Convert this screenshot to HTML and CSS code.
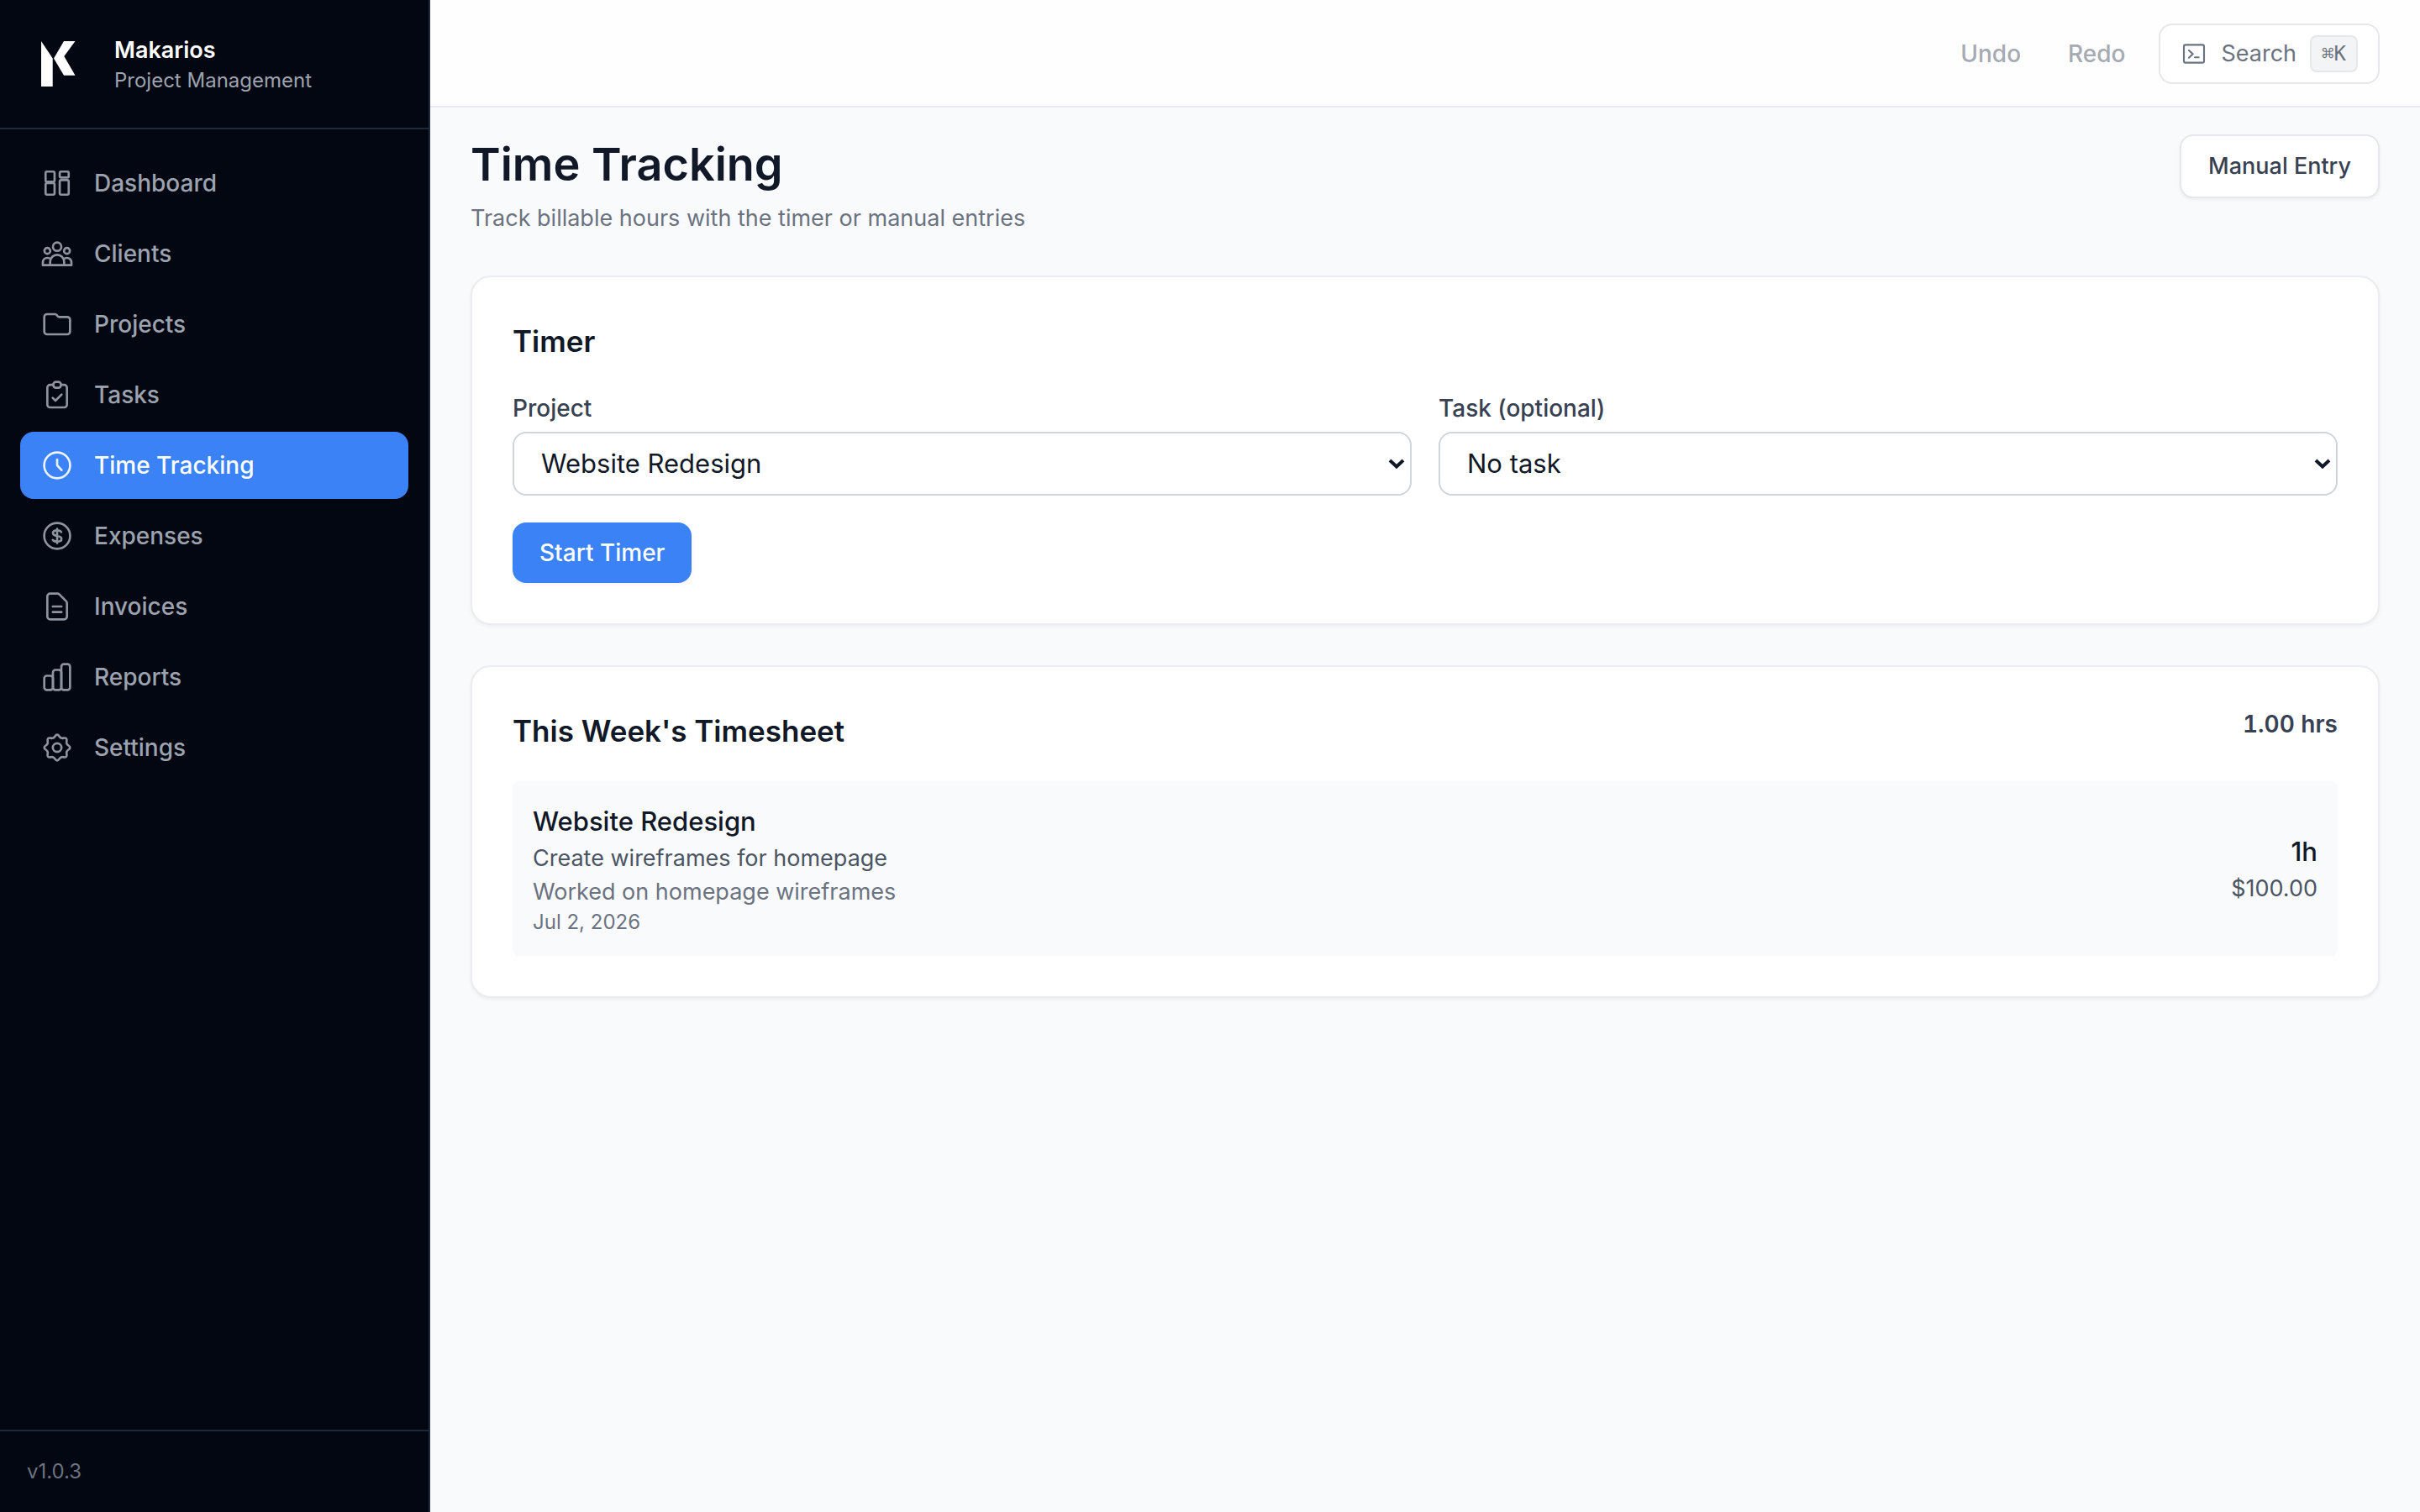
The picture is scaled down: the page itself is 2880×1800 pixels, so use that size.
FILE: index.html
```html
<!DOCTYPE html>
<html lang="en">
<head>
<meta charset="utf-8">
<meta name="viewport" content="width=device-width, initial-scale=1">
<title>Time Tracking - Makarios</title>
<link rel="stylesheet" href="styles.css">
</head>
<body>
<div class="app">
  <aside class="sidebar">
    <div class="brand">
      <svg class="brand-logo" viewBox="0 0 72 72" aria-hidden="true"><path d="M9 9 22.7 29.5V63H9zM36 9h13.5L36.3 27 49.5 49.7H36L24 29.5z"/></svg>
      <div>
        <div class="brand-name">Makarios</div>
        <div class="brand-sub">Project Management</div>
      </div>
    </div>
    <nav class="nav">
      <a class="nav-link" href="#dashboard"><svg class="icon" viewBox="0 0 24 24" aria-hidden="true"><rect x="3.75" y="3.75" width="6.4" height="7.3" rx="1"/><rect x="3.75" y="12" width="6.4" height="8.25" rx="1"/><rect x="13.85" y="3.75" width="6.4" height="4.3" rx="1"/><rect x="13.85" y="9.8" width="6.4" height="10.45" rx="1"/></svg>Dashboard</a>
      <a class="nav-link" href="#clients"><svg class="icon" viewBox="0 0 24 24" aria-hidden="true"><circle cx="12" cy="7" r="3"/><circle cx="5" cy="10" r="2.1"/><circle cx="19" cy="10" r="2.1"/><path d="M7 20.2v-2.4a5 5 0 0 1 10 0v2.4M7.4 15.8A3.4 3.4 0 0 0 5 15a3.2 3.2 0 0 0-3.2 3.2v2h20.4v-2A3.2 3.2 0 0 0 19 15c-.9 0-1.7.3-2.4.8"/></svg>Clients</a>
      <a class="nav-link" href="#projects"><svg class="icon" viewBox="0 0 24 24" aria-hidden="true"><path d="M2.8 6.8a2 2 0 0 1 2-2h5.600c.6 0 1 .2 1.400.7l.6.8c.2.400.5.5 1 .5h5.800a2 2 0 0 1 2 2v8.400a2 2 0 0 1-2 2H4.800a2 2 0 0 1-2-2z"/></svg>Projects</a>
      <a class="nav-link" href="#tasks"><svg class="icon" viewBox="0 0 24 24" aria-hidden="true"><path d="M9.2 4.900H7a2 2 0 0 0-2 2V19a2 2 0 0 0 2 2h10a2 2 0 0 0 2-2V6.900a2 2 0 0 0-2-2h-2.200"/><rect x="9.2" y="2.8" width="5.6" height="4.2" rx="2"/><path d="m8.8 14.2 2 2 4.400-4.400"/></svg>Tasks</a>
      <a class="nav-link active" href="#time" aria-current="page"><svg class="icon" viewBox="0 0 24 24" aria-hidden="true"><circle cx="12" cy="12" r="9.25"/><path d="M12 7.800V12l3.200 3.400"/></svg>Time Tracking</a>
      <a class="nav-link" href="#expenses"><svg class="icon" viewBox="0 0 24 24" aria-hidden="true"><circle cx="12" cy="12" r="9.25"/><path d="M12 7v10.200M14.900 9.200c-.5-.8-1.600-1.200-2.900-1.200-1.900 0-3 .8-3 1.900s1.100 1.800 3 2.100 3.100.9 3.100 2.100-1.200 2-3.100 2c-1.400 0-2.500-.4-3.100-1.200"/></svg>Expenses</a>
      <a class="nav-link" href="#invoices"><svg class="icon" viewBox="0 0 24 24" aria-hidden="true"><path d="M5 4.800a2 2 0 0 1 2-2h5.200c.5 0 1 .2 1.400.6l4.800 4.800c.4.400.6.900.6 1.400v9.600a2 2 0 0 1-2 2H7a2 2 0 0 1-2-2zM8.900 12h6.200M8.900 16h6.200"/></svg>Invoices</a>
      <a class="nav-link" href="#reports"><svg class="icon" viewBox="0 0 24 24" aria-hidden="true"><rect x="2.8" y="11.1" width="6.2" height="10.1" rx="1.8"/><rect x="9" y="6.9" width="6" height="14.3" rx="1.8"/><rect x="15" y="2.8" width="6.2" height="18.4" rx="1.8"/></svg>Reports</a>
      <a class="nav-link" href="#settings"><svg class="icon" viewBox="-12 -12 24 24" aria-hidden="true"><circle r="3.1"/><path d="M0-9.200C1.400-9.200 1.440-7.410 2.830-6.840 4.220-6.270 5.510-7.490 6.500-6.500 7.490-5.510 6.270-4.220 6.840-2.830 7.410-1.440 9.200-1.400 9.200 0 9.200 1.400 7.410 1.440 6.840 2.830 6.270 4.220 7.490 5.510 6.500 6.500 5.510 7.490 4.220 6.270 2.830 6.840 1.440 7.410 1.400 9.200 0 9.200-1.400 9.200-1.440 7.410-2.830 6.840-4.220 6.270-5.510 7.490-6.500 6.500-7.490 5.510-6.270 4.220-6.840 2.830-7.410 1.440-9.200 1.400-9.200 0-9.200-1.400-7.410-1.440-6.840-2.830-6.270-4.220-7.490-5.510-6.500-6.500-5.510-7.490-4.220-6.270-2.830-6.840-1.440-7.410-1.400-9.200 0-9.200z"/></svg>Settings</a>
    </nav>
    <div class="sidebar-footer">v1.0.3</div>
  </aside>
  <div class="content">
    <header class="topbar">
      <div class="history">
        <button class="ghost-button" type="button" disabled>Undo</button>
        <button class="ghost-button" type="button" disabled>Redo</button>
      </div>
      <button class="search-button" type="button">
        <svg class="search-icon" viewBox="0 0 24 24" aria-hidden="true"><rect x="3" y="4" width="18" height="16" rx="1.5"/><path d="m7.500 9 3.500 3.200-3.500 3.300M12.800 15.200h3.400"/></svg>
        <span>Search</span>
        <kbd class="shortcut">⌘K</kbd>
      </button>
    </header>
    <main class="page">
      <div class="page-header">
        <div>
          <h1 class="page-title">Time Tracking</h1>
          <p class="page-subtitle">Track billable hours with the timer or manual entries</p>
        </div>
        <button class="secondary-button" type="button">Manual Entry</button>
      </div>
      <section class="card">
        <h2 class="card-title">Timer</h2>
        <form class="timer-form">
          <div class="fields">
            <div class="field">
              <label class="field-label" for="project">Project</label>
              <select class="select" id="project"><option>Website Redesign</option></select>
            </div>
            <div class="field">
              <label class="field-label" for="task">Task (optional)</label>
              <select class="select" id="task"><option>No task</option></select>
            </div>
          </div>
          <button class="primary-button" type="button">Start Timer</button>
        </form>
      </section>
      <section class="card">
        <div class="card-header">
          <h2 class="card-title">This Week's Timesheet</h2>
          <div class="total">1.00 hrs</div>
        </div>
        <div class="entry">
          <div>
            <div class="entry-project">Website Redesign</div>
            <div class="entry-task">Create wireframes for homepage</div>
            <div class="entry-note">Worked on homepage wireframes</div>
            <div class="entry-date">Jul 2, 2026</div>
          </div>
          <div class="entry-figures">
            <div class="entry-project">1h</div>
            <div class="entry-task">$100.00</div>
          </div>
        </div>
      </section>
    </main>
  </div>
</div>
</body>
</html>
```
FILE: styles.css
```css
*, *::before, *::after { box-sizing: border-box; }

body {
  margin: 0;
  background: #f9fafc;
  color: #111827;
  font-family: Inter, "Liberation Sans", sans-serif;
  font-size: 27px;
  line-height: 40px;
}

h1, h2, p { margin: 0; }

button, select { font: inherit; }

.app { display: flex; min-height: 100vh; }

/* Sidebar */
.sidebar {
  display: flex;
  flex-direction: column;
  flex: 0 0 512px;
  background: #030712;
  border-right: 2px solid #1f2937;
}

.brand {
  display: flex;
  align-items: center;
  gap: 24px;
  padding: 40px;
  border-bottom: 2px solid #1f2937;
}

.brand-logo { width: 72px; height: 72px; fill: #fff; }

.brand-name { color: #fff; font-weight: 600; }

.brand-sub { color: #9ca3af; font-size: 24px; line-height: 32px; }

.nav {
  display: flex;
  flex: 1;
  flex-direction: column;
  gap: 4px;
  padding: 24px;
}

.nav-link {
  display: flex;
  align-items: center;
  gap: 24px;
  padding: 20px 24px;
  border-radius: 16px;
  color: #9ca3af;
  font-size: 28px;
  font-weight: 500;
  text-decoration: none;
}

.nav-link.active { background: #3b82f6; color: #fff; }

.icon {
  width: 40px;
  height: 40px;
  fill: none;
  stroke: currentColor;
  stroke-width: 1.6;
  stroke-linecap: round;
  stroke-linejoin: round;
  opacity: 0.9;
}

.sidebar-footer {
  padding: 32px;
  border-top: 2px solid #1f2937;
  color: #6b7280;
  font-size: 24px;
  line-height: 32px;
}

/* Top bar */
.content { flex: 1; min-width: 0; }

.topbar {
  display: flex;
  align-items: center;
  justify-content: flex-end;
  gap: 16px;
  padding: 28px 48px 26px;
  background: #fefefe;
  border-bottom: 2px solid #e9eaee;
}

.history { display: flex; gap: 8px; }

.ghost-button {
  padding: 16px 24px;
  border: 0;
  background: none;
  color: #a6aab3;
  font-size: 28px;
  font-weight: 500;
}

.search-button {
  display: flex;
  align-items: center;
  gap: 16px;
  height: 72px;
  padding: 0 24px;
  border: 2px solid #e5e7eb;
  border-radius: 16px;
  background: #fff;
  color: #6b7280;
}

.search-icon {
  width: 32px;
  height: 32px;
  fill: none;
  stroke: currentColor;
  stroke-width: 1.6;
  stroke-linecap: round;
  stroke-linejoin: round;
}

.shortcut {
  padding: 4px 12px;
  border: 2px solid #e5e7eb;
  border-radius: 8px;
  background: #f3f4f6;
  font-family: "DejaVu Sans Mono", "Liberation Mono", monospace;
  font-size: 24px;
  line-height: 32px;
}

/* Page */
.page {
  display: flex;
  flex-direction: column;
  gap: 48px;
  padding: 32px 48px;
}

.page-header {
  display: flex;
  align-items: flex-start;
  justify-content: space-between;
}

.page-title { font-size: 54px; font-weight: 600; line-height: 72px; }

.page-subtitle { margin-top: 8px; color: #6b7280; }

.secondary-button {
  padding: 16px 32px;
  border: 2px solid #e5e7eb;
  border-radius: 16px;
  background: #fff;
  box-shadow: 0 2px 4px rgba(0, 0, 0, 0.05);
  color: #374151;
  font-weight: 500;
}

.card {
  padding: 48px;
  border: 2px solid #ebecf0;
  border-radius: 24px;
  background: #fff;
  box-shadow: 0 2px 4px rgba(0, 0, 0, 0.05);
}

.card-title { font-size: 35px; font-weight: 600; line-height: 56px; }

.timer-form {
  display: flex;
  flex-direction: column;
  align-items: flex-start;
  gap: 32px;
  margin-top: 32px;
}

.fields {
  display: grid;
  grid-template-columns: 1fr 1fr;
  gap: 32px;
  width: 100%;
}

.field { display: flex; flex-direction: column; gap: 8px; }

.field-label { color: #374151; font-size: 28px; font-weight: 500; }

.select {
  height: 76px;
  padding: 0 32px;
  border: 2px solid #d1d5db;
  border-radius: 16px;
  appearance: none;
  background: #fff url("data:image/svg+xml,%3Csvg xmlns='http://www.w3.org/2000/svg' viewBox='0 0 20 12'%3E%3Cpath d='m2 2 8 7.500 8-7.500' fill='none' stroke='%23111827' stroke-width='4'/%3E%3C/svg%3E") no-repeat right 6px center / 20px 12px;
  color: #111827;
  font-size: 31px;
}

.primary-button {
  padding: 16px 32px;
  border: 0;
  border-radius: 16px;
  background: #3b82f6;
  box-shadow: 0 2px 4px rgba(0, 0, 0, 0.05);
  color: #fff;
  font-size: 28px;
  font-weight: 500;
}

.card-header {
  display: flex;
  align-items: flex-start;
  justify-content: space-between;
  margin-bottom: 32px;
}

.total {
  color: #374151;
  font-size: 28px;
  font-weight: 600;
  font-variant-numeric: tabular-nums;
}

.entry {
  display: flex;
  align-items: center;
  justify-content: space-between;
  padding: 24px;
  border-radius: 8px;
  background: #f9fafc;
}

.entry-project { font-size: 31px; font-weight: 500; line-height: 48px; }

.entry-task { color: #4b5563; }

.entry-note { color: #6b7280; }

.entry-date { color: #6b7280; font-size: 24px; line-height: 32px; }

.entry-figures { text-align: right; }
```
